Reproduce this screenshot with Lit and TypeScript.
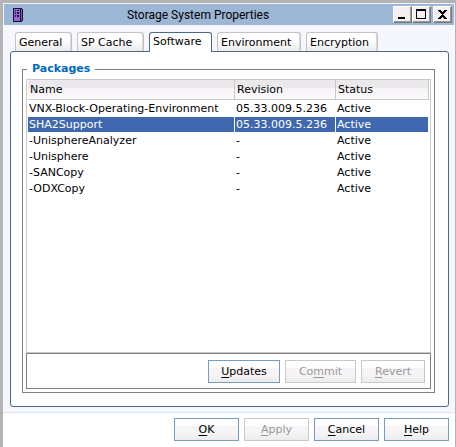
import { LitElement, html, css, svg } from "lit";
import { customElement, state } from "lit/decorators.js";

interface Pkg {
  name: string;
  revision: string;
  status: string;
}

const TABS = ["General", "SP Cache", "Software", "Environment", "Encryption"];

const PACKAGES: Pkg[] = [
  { name: "VNX-Block-Operating-Environment", revision: "05.33.009.5.236", status: "Active" },
  { name: "SHA2Support", revision: "05.33.009.5.236", status: "Active" },
  { name: "-UnisphereAnalyzer", revision: "-", status: "Active" },
  { name: "-Unisphere", revision: "-", status: "Active" },
  { name: "-SANCopy", revision: "-", status: "Active" },
  { name: "-ODXCopy", revision: "-", status: "Active" },
];

@customElement("title-bar")
export class TitleBar extends LitElement {
  static styles = css`
    :host {
      display: flex;
      align-items: center;
      height: 21px;
      padding: 0 2px 0 9px;
      background: #9cb6d6;
      color: #000;
    }
    .logo {
      display: block;
      flex: none;
    }
    .title {
      flex: 1;
      margin: 0;
      padding-right: 20px;
      font: 400 12px/20px Roboto, "Noto Sans", sans-serif;
      text-align: center;
      white-space: nowrap;
    }
    .controls {
      display: flex;
      flex: none;
    }
    .control {
      box-sizing: border-box;
      width: 19px;
      height: 17px;
      padding: 0;
      border: 1px solid;
      border-color: #fff #777 #777 #fff;
      background: #f2eef2;
      box-shadow: inset -1px -1px #999;
      flex: none;
    }
    .control svg {
      display: block;
    }
    .close {
      margin-left: 2px;
    }
  `;

  render() {
    return html`
      <svg class="logo" width="10" height="14" viewBox="0 0 10 14" shape-rendering="crispEdges" aria-hidden="true">
        <path d="M0 0h8v14H0z" fill="#180c30" />
        <path d="M1 1h6v12H1z" fill="#9468d0" />
        <path d="M8 0h1v1h1v12H9v1H8z" fill="#180c30" />
        <path d="M8 1h1v12H8z" fill="#8058b8" />
        <path d="M2 2h1v1H2zM4 2h2v1H4zM2 4h1v2H2zM4 4h2v2H4zM2 7h1v2H2zM4 7h2v2H4z" fill="#28104c" />
      </svg>
      <h1 class="title">Storage System Properties</h1>
      <div class="controls">
        <button class="control" aria-label="Minimize">
          <svg width="17" height="15" shape-rendering="crispEdges">${svg`<path d="M4 10h7v2H4z" />`}</svg>
        </button>
        <button class="control" aria-label="Maximize">
          <svg width="17" height="15" shape-rendering="crispEdges">
            ${svg`<path d="M3 2h10v10H3zM4 4v7h8V4z" fill-rule="evenodd" />`}
          </svg>
        </button>
        <button class="control close" aria-label="Close">
          <svg width="17" height="15" shape-rendering="crispEdges">
            ${svg`<path d="M4 3h3v1h1v1h1V4h1V3h3v1h-1v1h-1v1h-1v1H9v1h1v1h1v1h1v1h1v1h-3v-1H9v-1H8v1H7v1H4v-1h1v-1h1V9h1V8h1V7H7V6H6V5H5V4H4z" />`}
          </svg>
        </button>
      </div>
    `;
  }
}

@customElement("app-root")
export class AppRoot extends LitElement {
  @state() private tab = "Software";
  @state() private selected = 1;

  static styles = css`
    :host {
      display: flex;
      flex-direction: column;
      box-sizing: border-box;
      min-height: 100vh;
      border: solid #b4b4b4;
      border-width: 3px 1px 0 3px;
      background: #f6f6ff;
      color: #000;
      font: 11px/16px "DejaVu Sans", Verdana, sans-serif;
    }
    title-bar {
      border: solid #eef2fa;
      border-width: 1px 1px 0 1px;
    }
    .tabs {
      display: flex;
      gap: 5px;
      padding: 7px 6px 0 12px;
    }
    .tab {
      box-sizing: border-box;
      height: 19px;
      padding: 2px 3px 0;
      border: 1px solid #c3c3c3;
      border-bottom: 0;
      border-radius: 3px 3px 0 0;
      background: linear-gradient(#fff 40%, #ebebeb);
      box-shadow: inset -1px 0 #d8d8d8;
      color: inherit;
      font: inherit;
      text-align: left;
      white-space: nowrap;
    }
    .tab.active {
      position: relative;
      height: 20px;
      margin-bottom: -1px;
      padding: 0 3px 2px;
      border-color: #4a6a8a;
      background: #fff;
      box-shadow: none;
    }
    .t0 { width: 57px; }
    .t1 { width: 67px; }
    .t2 { width: 63px; }
    .t3 { width: 84px; }
    .t4 { width: 72px; }
    .panel {
      flex: 1;
      display: flex;
      margin: 0 6px 5px 7px;
      padding: 10px 13px 13px 11px;
      border: 1px solid #4a6a8a;
      border-radius: 3px;
      background: #fff;
    }
    .group {
      flex: 1;
      display: flex;
      flex-direction: column;
      min-width: 0;
      margin: 0;
      padding: 3px;
      border: 1px solid #808080;
    }
    .legend {
      margin-left: 1px;
      padding: 0 5px;
      color: #0068c0;
      font-weight: 700;
      line-height: 14px;
    }
    .list {
      flex: 1;
      padding: 0 1px;
      border: 1px solid #c8c8c8;
    }
    .table {
      width: 100%;
      border-collapse: separate;
      border-spacing: 0;
      table-layout: fixed;
    }
    .name { width: 207px; }
    .revision { width: 101px; }
    .head {
      height: 18px;
      padding: 1px 2px 0;
      border: solid #c8c8c8;
      border-width: 0 1px 1px 0;
      background: linear-gradient(#eae8ea 0 40%, #f4f2f4 40%, #fcfafc);
      font-weight: 400;
      line-height: 18px;
      text-align: left;
    }
    .spacer {
      height: 1px;
      padding: 0;
    }
    .cell {
      height: 14px;
      padding: 1px 1px 0;
      border: solid transparent;
      border-width: 0 1px 1px 0;
      line-height: 14px;
      white-space: nowrap;
    }
    .picked .cell {
      border-color: #fff;
      background: #4068b0;
      color: #fff;
    }
    .actions,
    .footer {
      display: flex;
      justify-content: flex-end;
      gap: 5px;
    }
    .actions {
      padding: 6px 5px 5px;
      border: 1px solid #808080;
    }
    .footer {
      padding: 5px 6px 6px;
      border-top: 1px solid #dce4fc;
      background: #fff;
    }
    .button {
      box-sizing: border-box;
      width: 65px;
      height: 23px;
      padding: 0;
      border: 1px solid #789cc0;
      background: linear-gradient(#fff 35%, #f6f4f6 35% 65%, #ececec);
      color: #000;
      font: inherit;
    }
    .updates { width: 72px; }
    .commit { width: 71px; }
    .revert { width: 64px; }
    .button:disabled {
      border-color: #c8c8c8;
      color: #999;
    }
    .key {
      text-decoration: underline;
      text-underline-offset: 2px;
    }
  `;

  render() {
    return html`
      <title-bar></title-bar>
      <div class="tabs" role="tablist">
        ${TABS.map(
          (t, i) => html`<button
            class="tab t${i} ${t === this.tab ? "active" : ""}"
            role="tab"
            aria-selected=${t === this.tab ? "true" : "false"}
            @click=${() => (this.tab = t)}
          >${t}</button>`
        )}
      </div>
      <main class="panel" role="tabpanel">
        <fieldset class="group">
          <legend class="legend">Packages</legend>
          <div class="list">
            <table class="table">
              <colgroup>
                <col class="name" />
                <col class="revision" />
                <col />
              </colgroup>
              <thead>
                <tr>
                  <th class="head" scope="col">Name</th>
                  <th class="head" scope="col">Revision</th>
                  <th class="head" scope="col">Status</th>
                </tr>
              </thead>
              <tbody>
                <tr aria-hidden="true"><td class="spacer" colspan="3"></td></tr>
                ${PACKAGES.map(
                  (p, i) => html`<tr class=${i === this.selected ? "picked" : ""} @click=${() => (this.selected = i)}>
                    <td class="cell">${p.name}</td>
                    <td class="cell">${p.revision}</td>
                    <td class="cell">${p.status}</td>
                  </tr>`
                )}
              </tbody>
            </table>
          </div>
          <div class="actions">
            <button class="button updates"><span class="key">U</span>pdates</button>
            <button class="button commit" disabled>Co<span class="key">m</span>mit</button>
            <button class="button revert" disabled><span class="key">R</span>evert</button>
          </div>
        </fieldset>
      </main>
      <footer class="footer">
        <button class="button"><span class="key">O</span>K</button>
        <button class="button" disabled><span class="key">A</span>pply</button>
        <button class="button"><span class="key">C</span>ancel</button>
        <button class="button"><span class="key">H</span>elp</button>
      </footer>
    `;
  }
}
